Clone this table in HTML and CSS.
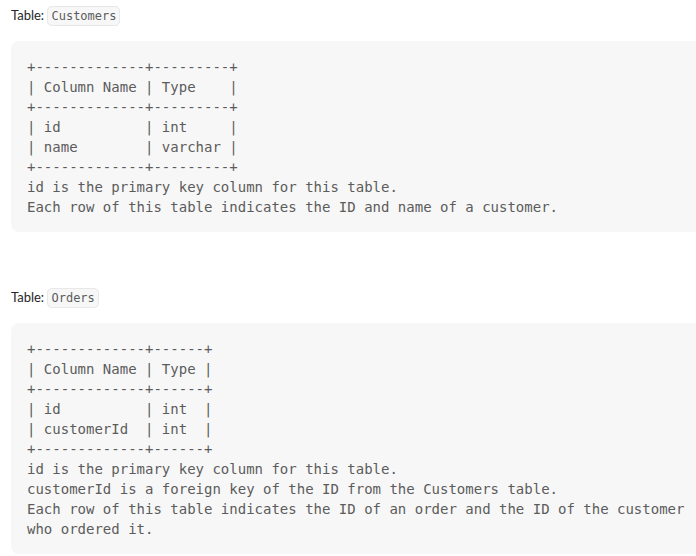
FILE: index.html
```html
<!DOCTYPE html>
<html>
<head>
<meta charset="utf-8">
<link rel="stylesheet" href="styles.css">
</head>
<body>
<div class="page">
<p class="label">Table: <code class="inline">Customers</code></p>
<pre class="block">+-------------+---------+
| Column Name | Type    |
+-------------+---------+
| id          | int     |
| name        | varchar |
+-------------+---------+
id is the primary key column for this table.
Each row of this table indicates the ID and name of a customer.</pre>
<p class="label label-second">Table: <code class="inline">Orders</code></p>
<pre class="block">+-------------+------+
| Column Name | Type |
+-------------+------+
| id          | int  |
| customerId  | int  |
+-------------+------+
id is the primary key column for this table.
customerId is a foreign key of the ID from the Customers table.
Each row of this table indicates the ID of an order and the ID of the customer
who ordered it.</pre>
</div>
</body>
</html>
```
FILE: styles.css
```css
html, body {
  margin: 0;
  padding: 0;
  background: #ffffff;
}
.page {
  padding-left: 11px;
}
.label {
  margin: 5px 0 0 0;
  font-family: Lato, "Liberation Sans", sans-serif;
  font-size: 13px;
  line-height: 21px;
  height: 21px;
  color: #262626;
}
.label-second {
  margin-top: 55px;
}
.inline {
  font-family: "DejaVu Sans Mono", monospace;
  font-size: 12px;
  color: #5c5c5c;
  background: #f7f7f7;
  border: 1px solid #e8e8e8;
  border-radius: 5px;
  padding: 2px 3px;
}
.block {
  margin: 15px 0 0 0;
  padding: 16px 0 15px 16px;
  background: #f7f7f7;
  border-radius: 8px 0 0 8px;
  font-family: "DejaVu Sans Mono", monospace;
  font-size: 14px;
  line-height: 20px;
  color: #5c5c5c;
  white-space: pre;
  overflow: hidden;
}
```
